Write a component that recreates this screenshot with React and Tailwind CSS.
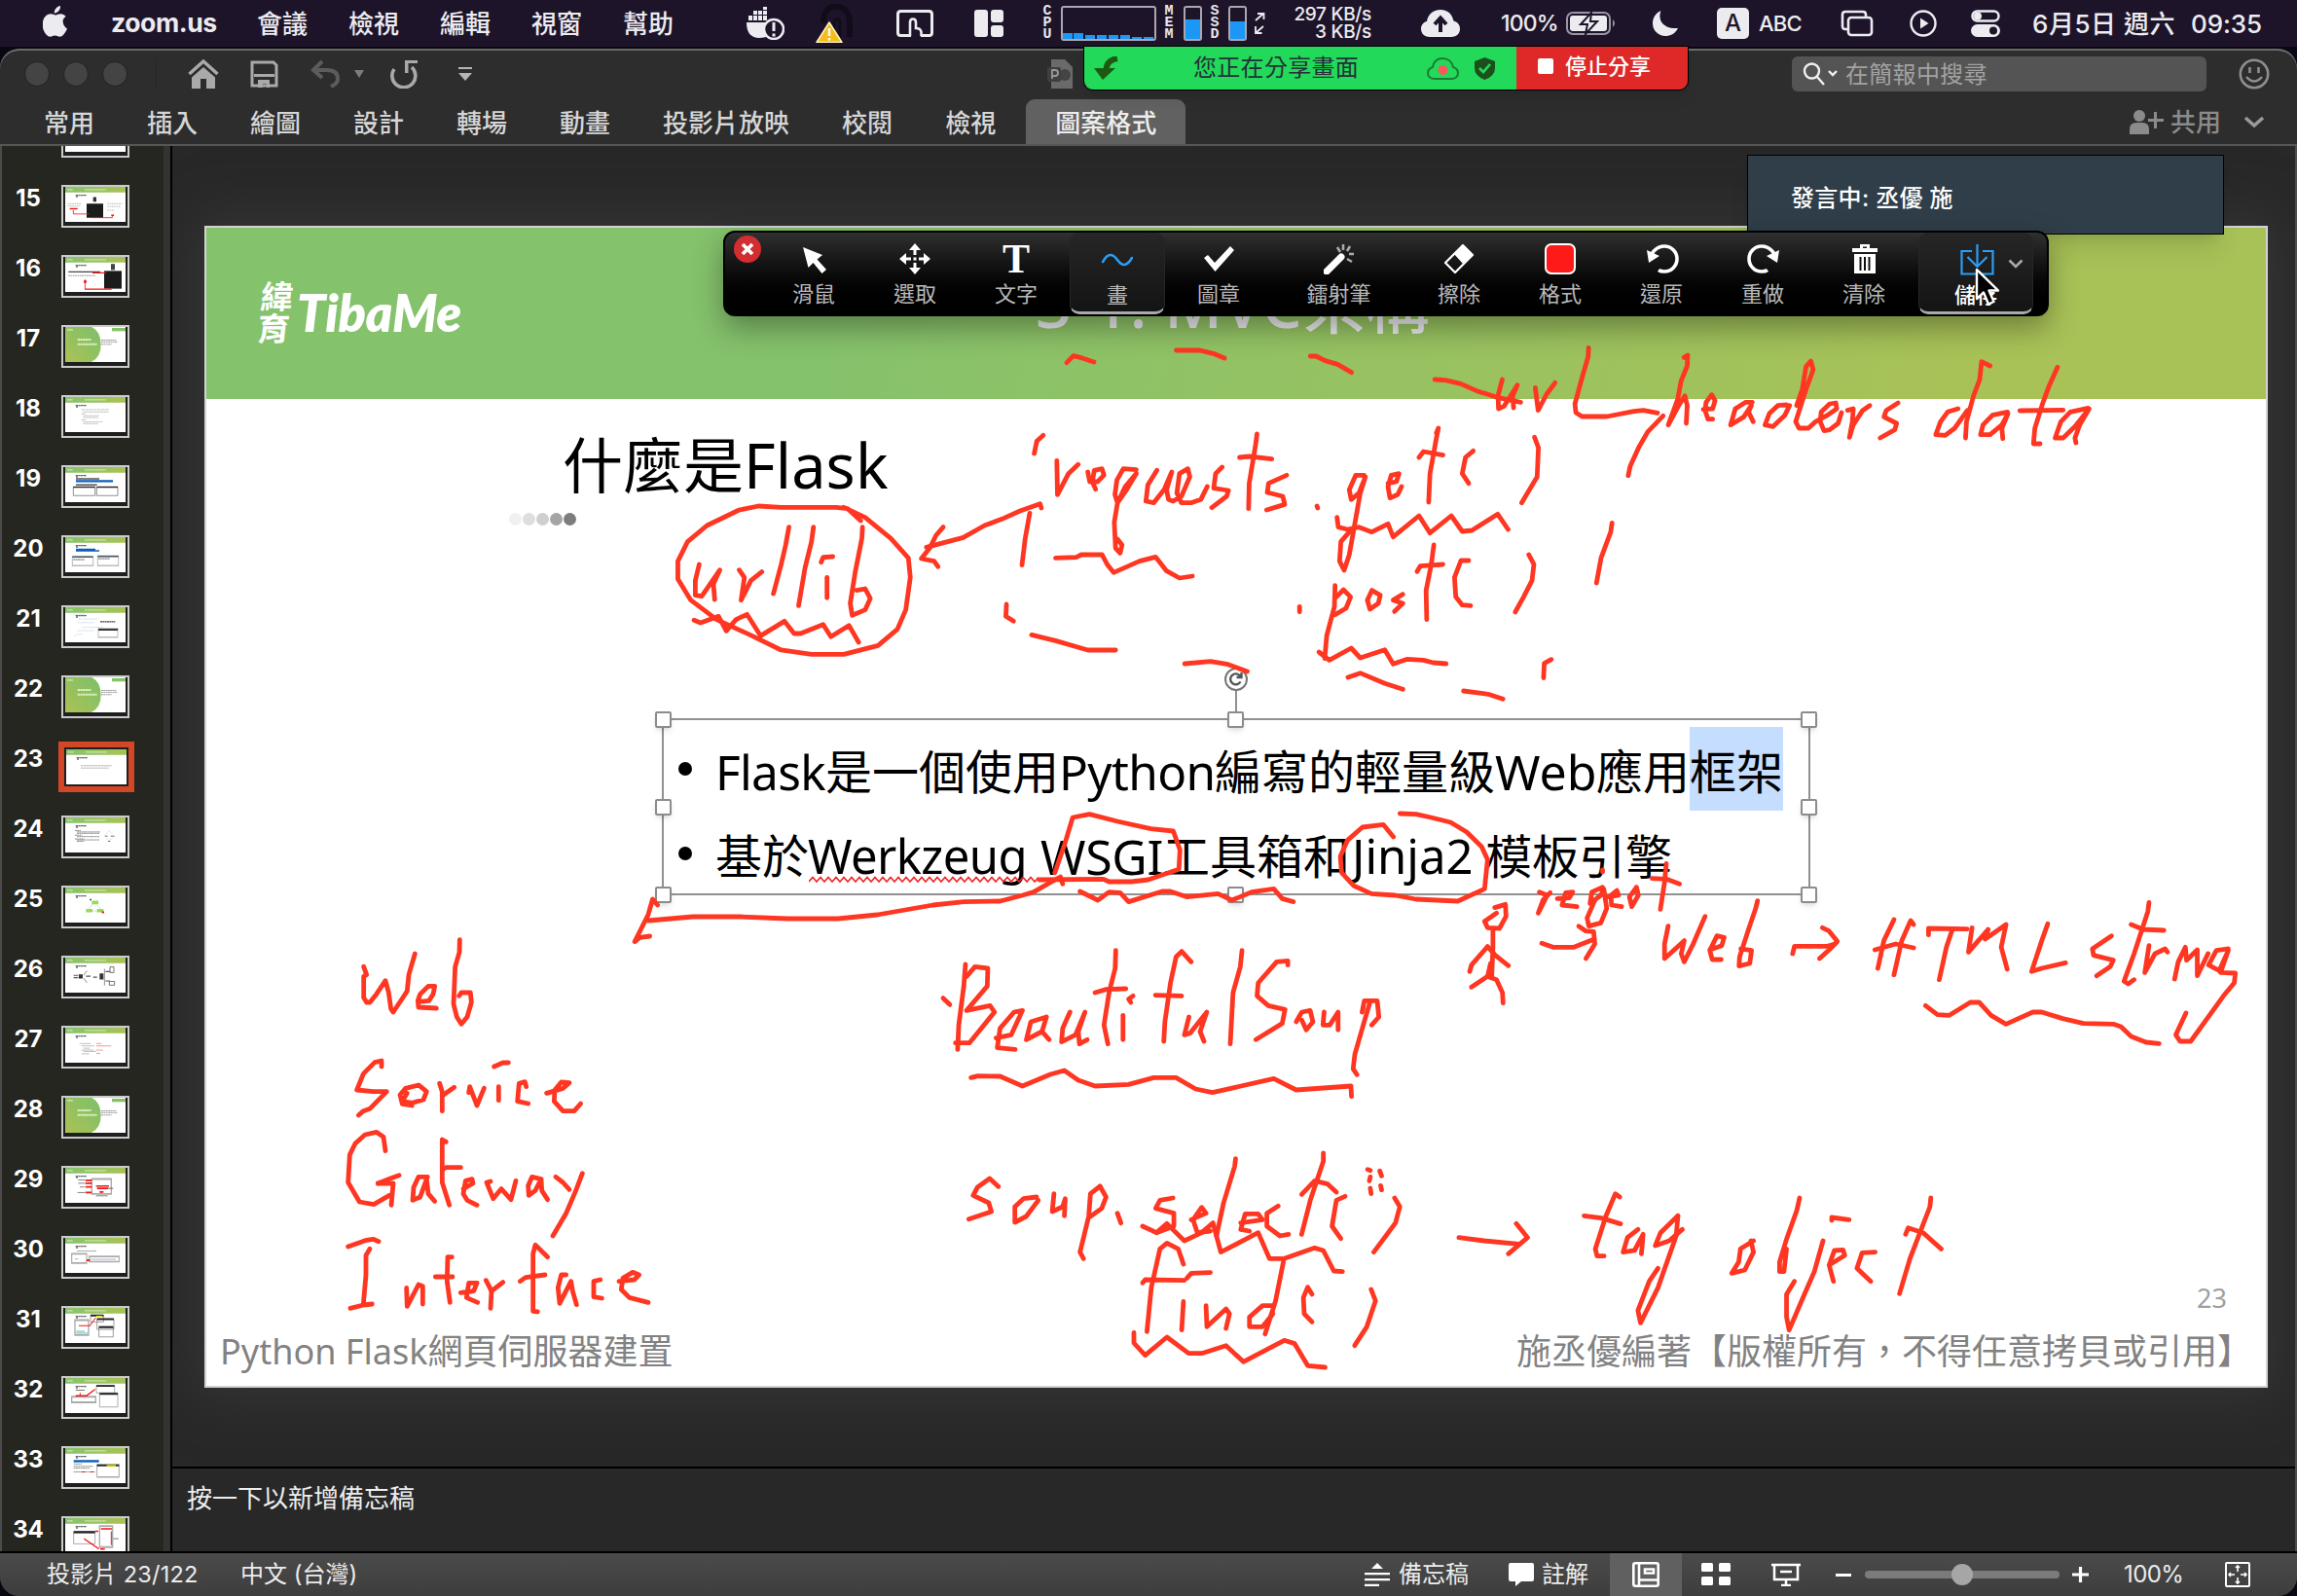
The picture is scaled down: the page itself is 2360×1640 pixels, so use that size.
import React from "react";

/* ---------- freehand ink strokes, grouped by drawing region ---------- */
const INK = [
  {
    t: "translate(730 220) scale(0.4592 0.33333)",
    s: [
      "797,458 812,437 830,443 858,456",
      "1042,420 1095,420 1125,430 1150,444",
      "1342,438 1355,438 1375,452 1403,463 1434,488",
    ],
  },
  {
    t: "translate(1400 220) scale(0.4847 0.33333)",
    s: [
      "153,510 175,512 208,523 242,545 285,565 335,580",
      "296,510 287,560 288,600 300,592 328,527 318,560 320,597",
      "366,535 372,605 390,555 408,520",
      "479,412 478,440 466,500 450,585 452,612 465,624 518,624 575,608 595,605 625,613",
      "637,622 605,670 585,720 567,778 563,806",
      "681,442 689,435 688,468 675,515 668,570 648,650 670,590 683,560 688,590 686,645",
      "722,602 742,600 747,575 740,557 728,580 726,605 732,632 742,632",
      "826,580 812,580 790,600 780,650 808,625 824,590 818,610 828,640",
      "898,588 880,590 862,615 853,650 870,655 895,620 905,590",
      "920,590 932,540 940,470 950,453 955,480 940,540 918,640 925,660 945,660 960,640 985,620 1005,600 1003,582 990,585 972,610 970,640 978,668 990,665 1008,645 1015,612",
      "1028,605 1040,600 1038,640 1032,688 1040,650 1060,605 1075,590",
      "1135,582 1110,605 1105,625 1132,645 1128,665 1097,690",
      "1262,600 1240,610 1225,640 1215,680 1235,682 1255,660 1282,605",
      "1330,468 1312,455 1308,510 1295,560 1280,640 1278,690",
      "1367,610 1335,620 1315,650 1310,680 1330,680 1355,650 1368,615 1355,660 1357,692",
      "1473,472 1455,530 1440,590 1425,660 1422,708 1436,708",
      "1393,606 1485,604",
      "1538,598 1500,610 1480,640 1468,690 1485,690 1510,655 1540,600 1520,650 1510,690 1512,705",
    ],
  },
  {
    t: "translate(660 420) scale(0.66327 0.33333)",
    s: [
      "621,82 611,100 607,138",
      "642,160 643,265 660,200 675,172",
      "690,195 693,225 705,225 715,205 712,185 700,190 697,225 702,248",
      "765,188 745,185 735,220 732,265 736,290 750,250 765,200 748,240 736,290 731,350 733,430 740,445 743,420 736,402",
      "797,190 783,235 780,285 792,290 808,250 820,195 812,250 815,280 822,285 835,270 848,210 845,185 832,200 828,260 835,290 850,290 865,280 875,240",
      "898,180 888,200 885,245 908,252 905,270 882,305",
      "952,78 950,110 940,230 939,308",
      "925,150 940,147 975,155",
      "998,205 970,230 968,258 992,270 995,295 967,312",
      "1045,300 1046,306",
      "1118,205 1105,205 1095,250 1098,280 1110,260 1120,210 1112,260 1104,350 1095,450 1087,498 1080,470 1082,410 1095,380",
      "1155,230 1168,225 1172,200 1160,205 1155,240 1158,275 1170,265 1176,240",
      "1230,75 1233,60 1230,90 1220,200 1218,288",
      "1203,150 1210,132 1240,143",
      "1287,130 1275,150 1270,200 1280,230",
      "1382,88 1388,120 1386,210 1362,290",
      "1076,335 1078,365 1092,372 1110,365 1130,380 1155,355 1163,395 1203,330 1220,383 1253,330 1270,378 1285,375 1325,325 1341,372",
      "600,322 593,400 588,482",
      "618,306 616,293 585,315 557,340 530,360 497,397 440,427",
      "466,365 455,390 445,430 432,462 452,470 458,487",
      "640,460 672,458 680,450 712,450 720,480 730,505 770,470 795,457 812,500 832,522 852,516",
      "564,603 563,640 575,655",
      "603,697 640,715 690,744 733,744",
      "840,786 880,779 905,787 937,810",
      "338,345 318,308 300,304 215,304 180,300 150,312 100,360 70,410 55,470 55,525 75,590 115,650 170,700 215,744 262,757 312,757 365,730 395,680 408,620 415,520 412,460 385,400 345,335 312,304",
      "88,480 82,530 82,575 92,578 120,497 110,540 112,588",
      "150,497 158,520 153,590 168,530 185,503",
      "227,365 222,420 215,480 203,570",
      "265,365 262,410 252,490 242,607",
      "277,473 280,458 295,456",
      "286,520 286,583",
      "341,365 340,400 330,500 322,600 325,637 345,620 353,585 345,555 332,560",
      "80,652 90,660 118,640 130,685 145,650 162,634 183,700 220,655 235,693 245,693 280,665 292,703 320,668 335,720",
      "1018,610 1018,626",
      "1073,545 1072,610 1060,700 1057,770",
      "1075,580 1086,558 1097,580 1090,615 1073,635",
      "1048,750 1064,775 1098,738 1112,768 1150,743 1163,787 1185,772 1210,775 1225,783 1245,786",
      "1130,560 1123,590 1127,618 1140,600 1143,575 1130,560",
      "1178,572 1163,590 1178,600 1165,625",
      "1226,420 1222,480 1214,560 1215,650",
      "1200,502 1205,485 1240,480",
      "1280,468 1268,468 1258,520 1260,580 1270,605 1283,607",
      "1373,450 1381,480 1378,530 1365,580 1352,627",
      "1502,352 1500,380 1485,460 1478,537",
      "1408,773 1397,785 1396,830",
      "1093,828 1112,815 1150,847 1178,865",
      "1272,870 1310,880 1333,895",
    ],
  },
  {
    t: "translate(620 700) scale(0.57398 0.33333)",
    s: [
      "808,590 826,500 840,420 870,410 920,432 980,455 1020,462 1032,520 1030,580 975,612 945,618 905,618 895,610 780,612",
      "822,625 818,603 795,625 770,650 750,660 710,678 645,680 590,690 490,720 420,732 330,732 245,726 160,726 80,738",
      "97,690 88,672 80,720 56,803 65,790 83,786",
      "853,648 885,675 905,650 925,652 940,680 1000,648 1015,648 1045,665 1100,655 1125,675 1160,650 1200,640 1215,670 1235,680",
      "608,977 620,997",
      "648,873 645,940 636,1060 634,1135",
      "650,910 665,880 688,885 687,940 650,1015 692,1000 700,1020 655,1115 630,1115",
      "703,1100 730,1090 750,1015 735,1020 710,1070 705,1130 737,1135",
      "793,1035 765,1050 757,1105 785,1080 793,1035 785,1080 798,1105",
      "835,1020 822,1070 820,1112 845,1090 862,1020 850,1080 852,1118 866,1105",
      "917,830 916,885 905,960 896,1060 903,1118",
      "880,960 900,950 935,948",
      "948,970 940,980 944,990",
      "930,1030 930,1105",
      "1052,865 1035,833 1025,850 1015,930 1005,1050 1003,1110",
      "988,968 1035,970",
      "1048,1035 1040,1090 1050,1085 1080,1020 1068,1080 1075,1110",
      "1143,830 1140,880 1127,960 1122,1118",
      "1225,875 1225,862 1205,865 1172,930 1170,970 1190,1000 1220,1012 1215,1055 1168,1105",
      "1240,1050 1250,1020 1265,1015 1270,1050 1258,1075 1250,1045",
      "1290,1020 1288,1060 1300,1060 1315,1020 1315,1075",
      "1358,1020 1362,985 1385,985 1388,1035 1375,1060",
      "1372,990 1360,1060 1345,1150 1342,1195 1349,1213",
      "658,1222 670,1217 710,1218 750,1248 800,1212 825,1200 850,1230 880,1248 940,1243 985,1222 1025,1222 1060,1257 1090,1268 1200,1225 1240,1260 1338,1248 1339,1280",
    ],
  },
  {
    t: "translate(1360 720) scale(0.61224 0.33333)",
    s: [
      "117,420 100,382 65,390 40,430 28,480 30,530 50,570 80,595 120,600 155,612 225,618 270,580 275,490 265,450 240,405 213,375 180,360 155,350 128,348",
      "362,590 375,600 360,655 368,615 380,592",
      "392,610 412,608 418,590 406,592 400,630 425,635",
      "468,575 450,590 447,625 465,600 470,580 475,640 465,685 445,695 442,670 455,615",
      "468,522 468,528",
      "478,605 495,600 492,585 482,600 483,630 500,635",
      "525,575 513,605 517,635 528,600 525,575",
      "575,502 572,560 565,643",
      "551,548 575,550 597,565",
      "287,638 305,628 306,665 295,702 275,700 270,680 290,655",
      "284,705 284,760 282,850",
      "245,835 248,815 275,758 288,785 310,817",
      "248,883 275,850 280,810",
      "278,852 290,860 300,900 301,932",
      "366,748 385,760 420,760 450,738",
      "428,695 440,710 453,712 455,750 440,795",
      "578,695 572,750 572,795 605,740 600,780 605,805 620,750 640,665",
      "648,768 668,755 672,730 660,725 648,770 652,798 667,798",
      "728,617 725,640 712,710 698,790 697,818 715,810 718,770 700,765",
      "787,780 790,757 845,757 858,750",
      "837,700 848,710 862,742 850,765 832,795",
      "957,675 940,740 930,825",
      "990,690 985,678 970,740 957,845",
      "925,768 960,750 990,762",
      "1015,722 1015,702 1080,704",
      "1055,705 1045,760 1033,860",
      "1088,700 1082,775 1115,705 1110,735 1145,690 1137,760 1147,828",
      "1215,688 1205,740 1188,835 1205,825 1245,808",
      "1322,725 1290,765 1292,785 1325,800 1320,820 1297,848",
      "1385,622 1383,650 1360,780 1343,865 1350,873 1360,860",
      "1355,690 1375,705 1410,708",
      "1385,755 1378,838 1395,780 1412,765 1416,775",
      "1428,858 1434,805 1446,760 1448,800 1466,768 1466,848 1484,780",
      "1518,765 1498,770 1485,815 1503,832 1518,770 1505,838 1530,840 1528,870 1510,910 1455,1050 1437,1050 1430,1030 1447,963",
      "1010,940 1030,968 1050,970 1085,930 1100,930 1120,970 1145,997 1190,960 1205,960 1240,980 1275,995 1325,997 1338,1005 1355,1035 1380,1053 1402,1057",
    ],
  },
  {
    t: "translate(200 940) scale(0.33333)",
    s: [
      "521,160 530,185 521,190 521,255 530,270 540,270 560,245 588,203 598,240 605,290 612,300 642,255 655,235 660,185 679,120",
      "690,268 722,265 735,245 740,220 720,220 695,245 688,265 690,285 745,288",
      "817,77 816,115 803,160 798,275 808,315 822,337 840,315 853,270 850,240 822,240 815,250",
      "576,468 576,450 555,455 520,490 500,540 550,545 592,545 540,598 520,605 505,618",
      "670,588 640,583 633,555 650,535 690,525 715,545 705,570 670,580 640,575 655,550",
      "755,520 763,545 763,605",
      "763,558 800,532",
      "845,548 848,530 870,588 892,535",
      "937,530 937,572",
      "923,468 950,456 967,456",
      "1022,530 1018,515 1000,520 995,575 1028,582",
      "1085,550 1135,535 1155,518 1130,516 1110,540 1108,575 1135,605 1170,605 1190,582",
      "588,728 582,685 560,670 525,678 495,705 478,740 473,825 508,885 552,893 600,865",
      "565,828 605,812 630,803",
      "565,828 612,828 606,895",
      "718,808 690,808 675,840 672,880 695,870 715,815 720,860 740,883",
      "775,700 763,693 763,825 785,895",
      "765,784 775,779 820,779",
      "828,845 858,828 855,815 835,820 828,860 840,880 870,895",
      "912,822 900,825 920,875 945,845 975,878 990,820",
      "1068,815 1040,808 1028,835 1030,865 1050,850 1068,815 1070,850 1088,878",
      "1113,808 1135,825 1155,847",
      "1195,797 1175,850 1145,920 1104,990",
      "473,1023 530,1003 550,1000 567,1007",
      "540,1030 528,1050 528,1110 520,1200",
      "480,1213 520,1203 547,1200",
      "653,1150 655,1207 690,1140 703,1145 703,1200",
      "793,1055 780,1055 778,1130 787,1195",
      "742,1116 795,1116",
      "820,1165 860,1160 870,1135 845,1135 838,1180 872,1195",
      "898,1127 915,1160 912,1213",
      "915,1160 950,1133",
      "1088,1055 1050,1018 1043,1045 1043,1222 1057,1224",
      "1003,1130 1020,1118 1080,1110",
      "1145,1110 1130,1110 1120,1150 1125,1198 1160,1130 1165,1160 1177,1202",
      "1250,1125 1230,1130 1230,1178 1255,1182",
      "1308,1130 1355,1125 1370,1110 1350,1102 1320,1120 1315,1155 1340,1180 1398,1195",
    ],
  },
  {
    t: "translate(940 1150) scale(0.89286 0.33333)",
    s: [
      "96,208 86,183 72,210 67,235 85,258 88,285 62,308",
      "140,240 125,245 115,270 115,318 128,300 142,250",
      "160,230 158,285 170,270 173,245 172,298",
      "213,207 202,230 200,300 190,410 194,430",
      "213,207 220,240 215,275 202,300",
      "233,290 237,320",
      "297,243 282,250 277,275 298,290 298,330 278,350 262,330",
      "278,350 290,322 310,375 330,350 343,320 352,410 395,350 408,430 425,430 460,397 470,405 482,468 492,470",
      "318,310 335,290 330,272 320,310 325,350 340,345",
      "369,122 368,145 355,260 347,360",
      "375,320 400,310 395,292 380,292 375,340 385,345",
      "418,268 405,290 405,330 420,360 430,355",
      "470,105 470,130 455,250 445,355",
      "445,232 460,190 475,200 485,225",
      "495,238 485,250 480,330 490,368",
      "521,155 524,158",
      "524,178 523,190",
      "535,160 537,175",
      "524,213 525,230",
      "536,205 537,218",
      "552,243 558,270 553,320 528,410",
      "626,365 655,375 695,385",
      "692,322 705,365 683,415",
      "309,447 303,400 290,382 282,400 272,520 267,655",
      "262,505 265,495 310,497",
      "313,490 318,475 340,473",
      "309,562 307,650",
      "335,575 336,640 358,585 362,600 358,645",
      "413,575 400,575 385,610 385,640 400,640 412,600",
      "424,440 415,560 403,662",
      "457,540 452,518 447,550 448,600 457,625",
      "525,525 530,560 520,640 506,698",
      "252,658 252,690 265,728 290,672 315,722 330,722 358,698 378,748 425,682 437,692 452,760 472,765",
      "811,240 806,230 795,300 783,400 785,422 793,422",
      "770,298 790,305 812,323",
      "832,340 820,365 815,410 828,405 838,355 836,415",
      "878,298 858,350 852,390 868,375 883,340",
      "878,298 876,360 855,520 835,628 832,590 845,500 855,460",
      "965,375 950,400 948,440 940,475 955,465 965,410 962,375",
      "1018,243 1015,280 1003,370 995,440 995,470 1000,470 1003,400",
      "1045,375 1035,470 1022,550 1006,650 1003,610 1003,540 1012,500",
      "1055,312 1055,303 1075,310",
      "1052,450 1070,420 1068,403 1058,405 1052,450 1057,500",
      "1105,410 1090,412 1084,460 1100,500",
      "1169,243 1168,270 1145,430 1133,538",
      "1140,355 1143,335 1160,350 1181,400",
    ],
  },
];

function Ink() {
  return (
    <svg className="pointer-events-none absolute left-0 top-0 h-[1640px] w-[2360px]" viewBox="0 0 2360 1640" fill="none" stroke="#ff3621" strokeWidth="4.8" strokeLinecap="round" strokeLinejoin="round">
      {INK.map((g, i) => (
        <g key={i} transform={g.t}>
          {g.s.map((p, j) => (
            <polyline key={j} points={p} vectorEffect="non-scaling-stroke" />
          ))}
        </g>
      ))}
    </svg>
  );
}

/* ---------- macOS menu bar ---------- */
function VLabel({ text }) {
  return (
    <span className="flex w-3 flex-col items-center font-['Liberation_Mono',monospace] text-[15px] font-bold leading-[12px] text-gray-200">
      {text.split("").map((c, i) => (
        <span key={i}>{c}</span>
      ))}
    </span>
  );
}

function MenuBar() {
  return (
    <div className="flex h-12 items-center whitespace-nowrap bg-[#1e142a] pb-[15px] pt-[15px] text-[26px] font-medium text-[#ececf0]">
      <svg className="ml-11 h-8 w-[26px] shrink-0 -translate-y-0.5" viewBox="0 0 26 32" fill="#ececf0">
        <path d="M18 0c.2 2-.5 3.900-1.700 5.300C15.100 6.700 13.400 7.600 11.800 7.400 11.600 5.600 12.500 3.700 13.600 2.500 14.800 1.100 16.600.2 18 0zM25 23.600c-.7 1.600-1.100 2.300-2 3.700-1.300 2-3.100 4.400-5.300 4.400-2 0-2.500-1.300-5.200-1.300s-3.300 1.300-5.300 1.300c-2.200 0-3.900-2.200-5.200-4.200C-1.500 22-.8 14.600 2.500 11 4 9.200 6 8.200 8 8.200c2.200 0 3.500 1.200 5.200 1.200 1.700 0 2.700-1.200 5.200-1.200 1.800 0 3.800 1 5.200 2.700-4.500 2.500-3.800 9 1.400 12.700z" />
      </svg>
      <b className="ml-11 w-[110px] text-[26.5px] font-bold tracking-[-0.4px]">zoom.us</b>
      <span className="ml-10 w-[54px]">會議</span>
      <span className="ml-10 w-[54px]">檢視</span>
      <span className="ml-10 w-[54px]">編輯</span>
      <span className="ml-10 w-[54px]">視窗</span>
      <span className="ml-10 w-[54px]">幫助</span>
      <svg className="ml-[72px] h-[34px] w-10 shrink-0" viewBox="0 0 40 34">
        <path d="M1 16h22v4c3-2 6-1 8 0 -2 8-8 12-17 12C6 32 1 27 1 16z" fill="#ececf0" />
        <path d="M3 9h4v5H3zM8 9h4v5H8zM13 9h4v5h-4zM18 9h4v5h-4zM8 4h4v4H8zM13 4h4v4h-4zM18 4h4v4h-4zM18 0h4v3h-4z" fill="#ececf0" />
        <circle cx="29" cy="23" r="10" fill="#1e142a" stroke="#ececf0" strokeWidth="2.500" />
        <path d="M29 16v9M29 27.500v3" stroke="#ececf0" strokeWidth="3" />
      </svg>
      <svg className="ml-8 h-10 w-10 shrink-0" viewBox="0 0 40 40">
        <path d="M8 20C8 6 14 3 21 3s14 4 14 17v14" fill="none" stroke="#120c1a" strokeWidth="6" />
        <path d="M19 34V18q3-5 6 0v16" fill="none" stroke="#120c1a" strokeWidth="3" />
        <path d="M14 19 27 39.500H1z" fill="#f5bd1c" stroke="#fff4c0" strokeWidth="1.500" strokeLinejoin="round" />
        <path d="M14 25v8M14 35v2.500" stroke="#fff" strokeWidth="2.500" />
      </svg>
      <svg className="ml-[43px] h-7 w-[38px] shrink-0" viewBox="0 0 38 28" fill="none" stroke="#ececf0" strokeWidth="3">
        <path d="M15 26.500H4.500Q1.500 26.500 1.500 23.500V4.500Q1.500 1.500 4.500 1.500h29q3 0 3 3v19q0 3-3 3H25" />
        <path d="M14 27V13q0-3.500 3-3.500t3 3.500v6q5 0 5.500 4v4" strokeWidth="2.600" />
      </svg>
      <svg className="ml-[42px] h-7 w-[30px] shrink-0" viewBox="0 0 30 28" fill="#ececf0">
        <rect width="14" height="28" rx="3" />
        <rect x="17" width="13" height="13" rx="3" />
        <rect x="17" y="16" width="13" height="12" rx="3" />
      </svg>
      <span className="ml-[39px]"><VLabel text="CPU" /></span>
      <svg className="ml-2 h-9 w-[98px] shrink-0" viewBox="0 0 98 36">
        <rect x="1" y="1" width="96" height="34" rx="2" fill="#1e142a" stroke="#aaa6b2" strokeWidth="2" />
        <g fill="#1b98f5">
          <path d="M2 28h10v6H2zM13 28h10v6H13zM25 30h10v4H25zM37 30h10v4H37zM49 30h10v4H49zM61 30h10v4H61zM73 32h10v2H73zM85 32h10v2H85z" />
        </g>
      </svg>
      <span className="ml-[7px]"><VLabel text="MEM" /></span>
      <svg className="ml-[9px] h-9 w-[19px] shrink-0" viewBox="0 0 19 36">
        <rect x="1" y="1" width="17" height="34" rx="2" fill="none" stroke="#aaa6b2" strokeWidth="2" />
        <path d="M2 14h15v20H2z" fill="#1b98f5" />
      </svg>
      <span className="ml-[7px]"><VLabel text="SSD" /></span>
      <svg className="ml-2 h-9 w-[19px] shrink-0" viewBox="0 0 19 36">
        <rect x="1" y="1" width="17" height="34" rx="2" fill="none" stroke="#aaa6b2" strokeWidth="2" />
        <path d="M2 16h15v18H2z" fill="#1b98f5" />
      </svg>
      <svg className="ml-[7px] h-6 w-3 shrink-0" viewBox="0 0 12 24" fill="none" stroke="#ececf0" strokeWidth="1.800">
        <path d="M2 9 10 2M4 2h6.500v6M10 15 2 22M8.500 22H2v-7" />
      </svg>
      <span className="w-[109px] text-right text-[19px] leading-[18px] tracking-[-0.3px]">297 KB/s<br />3 KB/s</span>
      <svg className="ml-[51px] h-7 w-10 shrink-0" viewBox="0 0 40 28">
        <path d="M9 28C3 28 0 24 0 19.500c0-4 3-7 6-7.500C7 5 12 0 20 0s12 5 13.500 11.500C37 12.500 40 15 40 19.500 40 24 37 28 31 28z" fill="#ececf0" />
        <path d="M20 23V10M14 15l6-6.500 6 6.500" fill="none" stroke="#1e142a" strokeWidth="4" />
      </svg>
      <span className="ml-[42px] w-[60px] text-[23px] tracking-[-0.8px]">100%</span>
      <svg className="ml-[7px] h-6 w-[52px] shrink-0" viewBox="0 0 52 24">
        <rect x="1" y="1" width="44" height="22" rx="6" fill="none" stroke="#9b96a4" strokeWidth="2" />
        <rect x="4" y="4" width="38" height="16" rx="3" fill="#ececf0" />
        <path d="M48 8q4 4 0 8z" fill="#9b96a4" />
        <path d="M26 1 15 13h7l-2 10 12-13h-7z" fill="#ececf0" stroke="#1e142a" strokeWidth="2" />
      </svg>
      <svg className="ml-[37px] h-[26px] w-[26px] shrink-0" viewBox="0 0 26 26" fill="#ececf0">
        <path d="M8.500 0C5 9 10 19 26 18c-3 6-8 8-13 8C6 26 0 20.500 0 13 0 7 3.500 2 8.500 0z" />
      </svg>
      <span className="ml-10 flex h-8 w-[33px] items-center justify-center rounded-[5px] bg-[#ececf0] text-2xl text-[#1e142a]">A</span>
      <span className="ml-2.5 w-[45px] text-[22px] tracking-[-0.8px]">ABC</span>
      <svg className="ml-[39px] h-7 w-[34px] shrink-0" viewBox="0 0 34 28" fill="none" stroke="#ececf0" strokeWidth="2.600">
        <path d="M8 20H5q-3 0-3-3V5q0-3 3-3h18q3 0 3 3v2" />
        <rect x="8" y="8" width="24" height="18" rx="3" />
      </svg>
      <svg className="ml-[37px] h-7 w-7 shrink-0" viewBox="0 0 28 28">
        <circle cx="14" cy="14" r="12.500" fill="none" stroke="#ececf0" strokeWidth="2.400" />
        <path d="M11 8.500v11l8.500-5.500z" fill="#ececf0" />
      </svg>
      <svg className="ml-[35px] h-7 w-[30px] shrink-0" viewBox="0 0 30 28">
        <rect x="1.500" y="1.500" width="27" height="10" rx="5" fill="none" stroke="#ececf0" strokeWidth="2.500" />
        <circle cx="7" cy="6.500" r="4" fill="#ececf0" />
        <rect y="15" width="30" height="13" rx="6.500" fill="#ececf0" />
        <circle cx="23" cy="21.500" r="4" fill="#1e142a" />
      </svg>
      <span className="ml-[33px] w-[150px] tracking-[0.5px]">6月5日 週六</span>
      <span className="ml-[13px] text-[26px] tracking-[-0.1px]">09:35</span>
    </div>
  );
}

/* ---------- window title bar and ribbon ---------- */
function TitleBar() {
  return (
    <div className="flex h-[52px] items-center pl-[25px] pr-[28px]">
      <i className="h-[26px] w-[26px] rounded-full border border-[#232323] bg-[#444]" />
      <i className="ml-3.5 h-[26px] w-[26px] rounded-full border border-[#232323] bg-[#444]" />
      <i className="ml-3.5 h-[26px] w-[26px] rounded-full border border-[#232323] bg-[#444]" />
      <i className="ml-[29px] h-8 w-px bg-[#262626]" />
      <svg className="ml-8 h-[30px] w-8" viewBox="0 0 32 30">
        <path d="M1.500 15 16 2l14.500 13" fill="none" stroke="#a9a9a9" strokeWidth="3.500" />
        <path d="M16 8 28 18.500V30h-9V20h-6v10H4V18.500z" fill="#a9a9a9" />
      </svg>
      <svg className="ml-8 h-7 w-[29px]" viewBox="0 0 29 28">
        <path d="M2 2h22l3 3v21H2z" fill="none" stroke="#a9a9a9" strokeWidth="3" />
        <path d="M4 14h21v3H4zM8 20h12v8h-3v-4h-4v4H8z" fill="#a9a9a9" />
      </svg>
      <svg className="ml-[33px] h-7 w-[31px]" viewBox="0 0 31 28" fill="none" stroke="#5c5c5c" strokeWidth="4">
        <path d="M12 1 3 10l9 8M3 10h14q11 0 11 9 0 5-7 8" />
      </svg>
      <svg className="ml-3.5 h-2 w-2.5" viewBox="0 0 10 8"><path d="M0 0h10L5 8z" fill="#7d7d7d" /></svg>
      <svg className="ml-[26px] h-[30px] w-[30px]" viewBox="0 0 30 30">
        <path d="M5 10a12 12 0 1 0 18-2" fill="none" stroke="#a9a9a9" strokeWidth="3.600" />
        <path d="M16 1h13v3H19.500v10H16z" fill="#a9a9a9" />
      </svg>
      <svg className="ml-10 h-3.5 w-4" viewBox="0 0 16 14"><path d="M1 0h14v2H1zM1 6h14l-7 8z" fill="#b5b5b5" /></svg>
      <svg className="ml-[590px] h-[30px] w-[26px]" viewBox="0 0 26 30">
        <path d="M4 0h14l8 8v22H4z" fill="#6a6a6a" />
        <circle cx="18" cy="16" r="6" fill="#444" />
        <rect y="8" width="14" height="15" rx="2" fill="#3f3f3f" />
        <path d="M5 20v-9h3q3 0 3 3t-3 3H5" fill="none" stroke="#999" strokeWidth="1.800" />
      </svg>
      <span className="ml-auto flex h-9 w-[426px] items-center rounded-[6px] bg-[#545454] pl-[11px] text-[24px] text-[#a2a2a2]">
        <svg className="h-6 w-[38px]" viewBox="0 0 38 24" fill="none" stroke="#f0f0f0" strokeWidth="2.400">
          <circle cx="9.500" cy="9" r="7.500" />
          <path d="m15 15 7 8M27 9l4 4 4-4" />
        </svg>
        <span className="pl-1.5 pt-0.5 tracking-[0.3px]">在簡報中搜尋</span>
      </span>
      <svg className="ml-[33px] h-8 w-8" viewBox="0 0 32 32" fill="none" stroke="#8e8e8e" strokeWidth="2.600">
        <circle cx="16" cy="16" r="14.200" />
        <path d="M11.500 9v6M20.500 9v6M8 19q8 9 16 0" />
      </svg>
    </div>
  );
}

const TABS = ["常用", "插入", "繪圖", "設計", "轉場", "動畫", "投影片放映", "校閱", "檢視"];

function Ribbon() {
  return (
    <div className="flex h-[46px] items-center text-[26px] font-medium text-[#d6d6d6]">
      <div className="flex gap-[54px] pl-[45px] pt-[2px]">
        {TABS.map((t) => (
          <span key={t}>{t}</span>
        ))}
      </div>
      <span className="ml-[31px] flex h-[46px] w-[164px] items-center justify-center rounded-t-[9px] bg-[#616161] pt-[2px] text-[#ededed]">圖案格式</span>
      <span className="ml-auto flex items-center pr-[33px] text-[#8b8b8b]">
        <svg className="h-[25px] w-9" viewBox="0 0 36 25" fill="#8b8b8b">
          <circle cx="11" cy="6" r="6" />
          <path d="M1 25v-5q0-7 7-7h6q7 0 7 7v5zM26 2h3v7h7v3h-7v7h-3v-7h-6V9h6z" />
        </svg>
        <span className="ml-[7px] text-[26px]">共用</span>
        <svg className="ml-[23px] h-3 w-[22px]" viewBox="0 0 22 12"><path d="m2 2 9 8 9-8" fill="none" stroke="#9a9a9a" strokeWidth="3.500" /></svg>
      </span>
    </div>
  );
}

/* ---------- slide thumbnails: viewBox is 186 x 75 ---------- */
const red = "#f01616";
const THUMBS = {
  14: null,
  15: (
    <g>
      <path d="M86 22h10v10H86z" fill="#333" />
      <path d="M66 36h51v30H66z" fill="#1b1b1b" />
      <path d="M8 36h42M8 41h38M130 36h45M130 42h40M130 50h22" stroke="#aaa" strokeWidth="2" strokeDasharray="5 2" />
      <path d="M25 50v8h48M145 60v6H82" stroke={red} strokeWidth="2" fill="none" />
      <path d="M14 47h24M142 61h8" stroke={red} strokeWidth="3" />
    </g>
  ),
  16: (
    <g>
      <path d="M141 15h12v13h-12z" fill="#444" />
      <path d="M120 30h54v38h-54z" fill="#1b1b1b" />
      <path d="M10 32h98" stroke="#445" strokeWidth="3" />
      <path d="M10 40h82" stroke="#777" strokeWidth="2" strokeDasharray="5 2" />
      <path d="M84 34h42M61 48v21h82" stroke={red} strokeWidth="2.500" fill="none" />
      <path d="M57 53h9" stroke={red} strokeWidth="5" />
    </g>
  ),
  18: <path d="M50 27h85M55 32h80M50 36h12M55 40h50M55 44h46M50 49h14M55 53h60M55 57h46" stroke="#aaa" strokeWidth="1.800" strokeDasharray="7 1" />,
  19: (
    <g>
      <path d="M33 25h72M33 38h65" stroke="#555" strokeWidth="3" />
      <path d="M33 30h114" stroke="#0a5fb8" strokeWidth="5" />
      <path d="M25 42h67v19H25zM97 42h65v19H97z" fill="#fff" stroke="#777" strokeWidth="2" />
      <path d="M25 43h67M97 43h65" stroke="#222" strokeWidth="3" />
    </g>
  ),
  20: (
    <g>
      <path d="M33 26h60M33 29h72" stroke="#0a5fb8" strokeWidth="3" />
      <path d="M22 42h64v19H22zM100 40h64v21h-64z" fill="#fff" stroke="#bbb" strokeWidth="3" />
      <path d="M22 42h64M100 41h64" stroke="#456" strokeWidth="3" />
      <path d="M25 48h34M102 46h36" stroke="#444" strokeWidth="2" strokeDasharray="6 1" />
    </g>
  ),
  21: (
    <g>
      <path d="M26 16h6M34 15h26M40 25h60M40 33h50M50 43h68M38 50h52M34 58h18M26 62h6" stroke="#d3dcef" strokeWidth="2" />
      <path d="M108 31h46" stroke="#444" strokeWidth="2.500" strokeDasharray="6 1" />
      <path d="M102 46h60v18h-60z" fill="#fff" stroke="#bbb" strokeWidth="3" />
      <path d="M102 48h60" stroke="#333" strokeWidth="4" />
    </g>
  ),
  23: <path d="M45 35h95M45 40h86" stroke="#999" strokeWidth="1.800" strokeDasharray="8 1" />,
  24: (
    <g>
      <path d="M30 28h18M36 31h72M36 34h70M30 38h22M36 41h70M30 46h28M36 48h70M36 51h22" stroke="#666" strokeWidth="1.800" strokeDasharray="6 1" />
      <path d="M122 40h9M140 40h12M132 51h7" stroke="#555" strokeWidth="2" />
      <path d="m125 36 10-8 12 8M126 44l8 6 12-6" stroke="#bbb" fill="none" />
    </g>
  ),
  25: (
    <g>
      <path d="M82 28h20v8H82zM64 46h20v7H64zM98 46h20v7H98z" fill="#93dc5c" />
      <path d="m74 45 10-9M108 45 98 37M84 50h14" stroke="#999" />
      <path d="M113 53h7" stroke={red} strokeWidth="4" />
      <path d="M76 26h5" stroke="#333" strokeWidth="3" />
    </g>
  ),
  26: (
    <g>
      <path d="M42 36h12v9H42zM106 34h12v13h-12z" fill="#333" />
      <path d="M26 38h14M26 43h14M64 40h14M86 42h12M124 30h14M124 50h14" stroke="#555" strokeWidth="2.500" />
      <path d="M57 38 67 28M57 44l10 10M121 24v36" stroke="#777" strokeWidth="2" fill="none" />
      <path d="M138 20h12v12h-12zM136 51h16v8h-16z" fill="#fff" stroke="#555" strokeWidth="2" />
    </g>
  ),
  27: (
    <g>
      <path d="M44 34h35M50 39h40M56 44h20M50 48h38M56 51h40M50 56h24" stroke="#aaa" strokeWidth="1.800" />
      <path d="M96 34h16M96 39h46M96 48h20M96 55h12" stroke="#f58080" strokeWidth="2" />
    </g>
  ),
  29: (
    <g>
      <path d="M82 24h60v32H82z" fill="#fff" stroke="#aaa" strokeWidth="4" />
      <path d="M40 26h20M40 33h20M45 41h14M38 53h22M95 60h36" stroke="#666" strokeWidth="2" />
      <path d="M62 27h20M62 33h20M62 41h20M62 53h20M95 39h40M98 44h34M106 52h12" stroke={red} strokeWidth="3.500" />
      <path d="M132 44h16" stroke="#444" strokeWidth="2" />
    </g>
  ),
  30: (
    <g>
      <path d="M36 28h60" stroke="#999" strokeWidth="2" />
      <path d="M20 34h46v20H20zM74 40h92v11H74z" fill="#fff" stroke="#aaa" strokeWidth="3.500" />
      <path d="M30 45h10M76 46h80" stroke="#99b" strokeWidth="2" />
      <path d="M66 48h10" stroke={red} strokeWidth="4" />
    </g>
  ),
  31: (
    <g>
      <path d="M30 26h42v32H30z" fill="#fff" stroke="#aaa" strokeWidth="4" />
      <path d="M34 50h26M34 54h36" stroke="#4aa" strokeWidth="2" />
      <path d="M78 16h40v14H78zM98 24h52v22H98zM104 40h44v22h-44z" fill="#fff" stroke="#888" strokeWidth="2" />
      <path d="M78 16h40M98 24h52M104 41h44" stroke="#222" strokeWidth="4" />
      <path d="M96 18h18" stroke="#e8e800" strokeWidth="3" />
      <path d="m42 38h34l18-17" stroke={red} strokeWidth="2.500" fill="none" />
    </g>
  ),
  32: (
    <g>
      <path d="M20 40h74v12H20z" fill="#fff" stroke="#aaa" strokeWidth="4" />
      <path d="M96 16h56v16H96zM106 32h56v30h-56z" fill="#fff" stroke="#999" strokeWidth="2" />
      <path d="M96 17h56M106 34h56" stroke="#222" strokeWidth="4" />
      <path d="M32 38h34l26-14M46 32v6" stroke={red} strokeWidth="3" fill="none" />
      <path d="M32 26h28" stroke="#555" strokeWidth="2" />
    </g>
  ),
  33: (
    <g>
      <path d="M26 28h78" stroke="#0a5fb8" strokeWidth="5" />
      <path d="M26 34h26M26 39h60M26 43h50M26 51h66" stroke="#777" strokeWidth="2" strokeDasharray="6 1" />
      <path d="M50 51h12M78 51h10" stroke={red} strokeWidth="2.500" />
      <path d="M98 36h68v26H98z" fill="#fff" stroke="#aaa" strokeWidth="3" />
      <path d="M98 37h68" stroke="#222" strokeWidth="4" />
      <path d="M128 38h28" stroke="#d8d800" strokeWidth="4" />
    </g>
  ),
  34: (
    <g>
      <path d="M26 30h66v25H26z" fill="#fff" stroke="#999" strokeWidth="2" />
      <path d="M26 30h66" stroke="#222" strokeWidth="5" />
      <path d="M106 17h40v45h-40z" fill="#fff" stroke="#aaa" strokeWidth="4" />
      <path d="M110 23h34M142 28v30M104 66 58 44M92 28h10M108 66h14" stroke={red} strokeWidth="3" fill="none" />
      <path d="M148 44h16" stroke="#555" strokeWidth="2" />
    </g>
  ),
};
const COVERS = [17, 22, 28];
const NUMBERS = Array.from({ length: 21 }, (_, i) => i + 14);

function MiniSlide({ n }) {
  if (COVERS.includes(n)) {
    return (
      <svg className="h-9 w-[62px]" viewBox="0 0 186 75" preserveAspectRatio="none">
        <rect width="186" height="75" fill="#fff" />
        <path d="M0 0h82q28 10 28 38T80 75H0z" fill="url(#coverGrad)" />
        <path d="M144 2h42v7h-42z" fill="#86c267" />
        <path d="M38 27h42M38 37h60" stroke="#d9eebf" strokeWidth="4" strokeDasharray="7 1" />
        <path d="M111 28h46M111 32h50M111 37h32" stroke="#888" strokeWidth="2" strokeDasharray="6 1" />
        <path d="M6 6h18" stroke="#c8e6b4" strokeWidth="3" />
      </svg>
    );
  }
  return (
    <svg className="h-9 w-[62px]" viewBox="0 0 186 75" preserveAspectRatio="none">
      <rect width="186" height="75" fill="#fff" />
      <rect width="186" height="12" fill="url(#headGrad)" />
      <path d="M6 6h18M60 6h66" stroke="#cfe6b4" strokeWidth="2.500" strokeDasharray="8 1" />
      <path d="M32 18h34M33 21h6" stroke="#666" strokeWidth="2.500" strokeDasharray="7 1" />
      {THUMBS[n]}
    </svg>
  );
}

function Sidebar() {
  return (
    <div className="flex w-[177px] shrink-0 overflow-hidden border-r-2 border-black bg-[#333]">
      <svg className="absolute h-0 w-0">
        <defs>
          <linearGradient id="headGrad"><stop offset="0" stopColor="#86c36c" /><stop offset="1" stopColor="#a9c255" /></linearGradient>
          <linearGradient id="coverGrad" x1="1" y1="0" x2="0" y2="1"><stop offset="0" stopColor="#7cc06b" /><stop offset="1" stopColor="#abc254" /></linearGradient>
        </defs>
      </svg>
      <div className="w-[168px] border-l-2 border-[#4c4c4c] bg-[#252620]">
        <div className="-mt-8 flex flex-col">
          {NUMBERS.map((n) => (
            <div key={n} className="flex h-[72px] items-start">
              <span className="flex w-[57px] justify-center pr-[3px] pt-px text-[24px] font-bold leading-[25px] text-white">{n > 14 ? n : null}</span>
              {n === 23 ? (
                <span className="-mt-1 ml-px flex h-[52px] w-[78px] items-center justify-center border-[6px] border-[#d24726] bg-[#1f1f1f]">
                  <MiniSlide n={n} />
                </span>
              ) : (
                <span className="ml-1 flex h-11 w-[70px] items-start justify-center border-2 border-[#cbcbcb] bg-[#1f1f1f]">
                  <MiniSlide n={n} />
                </span>
              )}
            </div>
          ))}
        </div>
      </div>
    </div>
  );
}

/* ---------- the slide ---------- */
function Handle({ className }) {
  return <i className={"absolute h-[17px] w-[17px] rounded-[2px] border-2 border-[#8c8c8c] bg-white shadow-md " + className} />;
}

function Slide() {
  return (
    <div className="flex h-[1194px] w-[2120px] flex-col border-2 border-[#d3d3d3] bg-white shadow-[0_0_50px_10px_#363636] font-['Noto_Sans','Noto_Sans_CJK_TC',sans-serif]">
      <div className="flex h-[176px] shrink-0 bg-[linear-gradient(100deg,#85c26c_30%,#a8c257_85%)]">
        <div className="ml-[54px] mt-[54px] flex h-[70px] text-white">
          <div className="flex w-10 -skew-x-6 flex-col text-[33px] font-bold leading-[33px]"><span>緯</span><span>育</span></div>
          <div className="-ml-px w-[170px] font-['Lato','Open_Sans',sans-serif] text-[52px] font-extrabold italic leading-[66px] tracking-[-0.2px]">TibaMe</div>
        </div>
        <div className="ml-[589px] mt-[38px] whitespace-nowrap text-[65px] font-medium leading-[80px] tracking-[0.5px] text-[#ebebee]">3-1. MVC架構</div>
      </div>
      <div className="ml-[366px] mt-[26px] h-[84px] whitespace-nowrap text-[62px] leading-[84px] text-black">什麼是<span className="text-[63px] tracking-[0.1px]">Flask</span></div>
      <div className="ml-[311px] mt-[7px] flex gap-px">
        <i className="h-[13px] w-[13px] rounded-full bg-[#f0f0f0]" />
        <i className="h-[13px] w-[13px] rounded-full bg-[#dedede]" />
        <i className="h-[13px] w-[13px] rounded-full bg-[#cfcfcf]" />
        <i className="h-[13px] w-[13px] rounded-full bg-[#a5a5a5]" />
        <i className="h-[13px] w-[13px] rounded-full bg-[#7d7d7d]" />
      </div>
      <div className="relative ml-[468px] mt-[198px] h-[182px] w-[1180px] border-2 border-[#919191] whitespace-nowrap text-[48px] text-black">
        <div className="mt-[7px] flex h-[86px] items-center">
          <i className="ml-[15px] h-3.5 w-3.5 rounded-full bg-black" />
          <span className="ml-[24px] w-[113px] pt-1.5 text-[49.5px] tracking-[-0.7px]">Flask</span>
          <span className="w-[240px] pt-1.5">是一個使用</span>
          <span className="w-[160px] pt-1.5 text-[49.5px] tracking-[-0.6px]">Python</span>
          <span className="w-[288px] pt-1.5">編寫的輕量級</span>
          <span className="w-[104px] pt-1.5 text-[50px]">Web</span>
          <span className="w-24 pt-1.5">應用</span>
          <span className="flex h-[86px] w-24 items-center bg-[#c5deff] pt-1.5">框架</span>
        </div>
        <div className="flex h-[88px] items-center">
          <i className="ml-[15px] h-3.5 w-3.5 rounded-full bg-black" />
          <span className="ml-[24px] w-[95px] pt-1.5">基於</span>
          <span className="w-[239px] pt-1.5 text-[49px] tracking-[-0.6px]">Werkzeug</span>
          <span className="w-[126px] pt-1.5 text-[50px] tracking-[-0.3px]">WSGI</span>
          <span className="w-[194px] pt-1.5">工具箱和</span>
          <span className="w-[137px] pt-1.5 text-[49px]">Jinja2</span>
          <span className="pt-1.5">模板引擎</span>
        </div>
        <svg className="absolute left-[149px] top-[160px] h-2 w-[236px]" viewBox="0 0 236 8">
          <polyline points={Array.from({ length: 60 }, (_, i) => i * 4 + "," + (i % 2 ? 1.5 : 6)).join(" ")} fill="none" stroke="#f02020" strokeWidth="1.500" />
        </svg>
        <i className="absolute -top-8 left-[587px] h-8 w-0.5 bg-[#919191]" />
        <span className="absolute -top-[54px] left-[576px] flex h-6 w-6 items-center justify-center rounded-full border-2 border-[#777] bg-white">
          <svg className="h-4 w-4" viewBox="0 0 16 16" fill="none" stroke="#555" strokeWidth="2.400"><path d="M12.500 10.500A5.500 5.500 0 1 1 12 4.500M13.500 1v5H8.500" /></svg>
        </span>
        <Handle className="-left-[9px] -top-[9px]" />
        <Handle className="left-[579px] -top-[9px]" />
        <Handle className="left-[1168px] -top-[9px]" />
        <Handle className="-left-[9px] top-[81px]" />
        <Handle className="left-[1168px] top-[81px]" />
        <Handle className="-left-[9px] top-[171px]" />
        <Handle className="left-[579px] top-[171px]" />
        <Handle className="left-[1168px] top-[171px]" />
      </div>
      <div className="mt-auto pr-[40px] text-right text-[27px] leading-8 text-[#a0a0a0]">23</div>
      <div className="mb-[4px] mt-[8px] flex h-[62px] items-center justify-between whitespace-nowrap pl-[14px] pr-[14px] text-[36px] text-[#828282]">
        <span>Python Flask網頁伺服器建置</span>
        <span lang="zh-TW">施丞優編著【版權所有，不得任意拷貝或引用】</span>
      </div>
    </div>
  );
}

/* ---------- status bar ---------- */
function StatusBar() {
  return (
    <div className="flex h-[46px] shrink-0 items-center whitespace-nowrap border-t-2 border-black bg-linear-to-b from-[#4b4b4b] to-[#3d3d3d] text-[24px] text-[#ececec]">
      <span className="ml-[48px] w-[199px]">投影片 <span className="text-[23.500px] tracking-[0.2px]">23/122</span></span>
      <span>中文 (台灣)</span>
      <div className="ml-auto flex items-center">
        <svg className="h-6 w-[26px]" viewBox="0 0 26 24" fill="#fff"><path d="M13 0l6 6H7zM0 10h26v2.200H0zM0 16h26v2.200H0zM0 21.800h15V24H0z" /></svg>
        <span className="ml-[9px] w-[72px]">備忘稿</span>
        <svg className="ml-[41px] h-6 w-[26px]" viewBox="0 0 26 24" fill="#fff"><path d="M2 0h22q2 0 2 2v15q0 2-2 2H13l-6 5v-5H2q-2 0-2-2V2q0-2 2-2z" /></svg>
        <span className="ml-2 w-12">註解</span>
        <span className="ml-[22px] flex h-11 w-[74px] items-center justify-center bg-[#606060]">
          <svg className="h-[26px] w-7" viewBox="0 0 28 26" fill="none" stroke="#fff" strokeWidth="2.600"><rect x="1.300" y="1.300" width="25.400" height="23.400" rx="2" /><path d="M7 1v24M8 18.500h18M13 7.500h9v4h-9z" /></svg>
        </span>
        <svg className="ml-5 h-6 w-[31px]" viewBox="0 0 31 24" fill="#fff"><rect width="12" height="9" rx="1.500" /><rect x="18" width="12" height="9" rx="1.500" /><rect y="14" width="12" height="9" rx="1.500" /><rect x="18" y="14" width="12" height="9" rx="1.500" /></svg>
        <svg className="ml-[41px] h-6 w-[30px]" viewBox="0 0 30 24" fill="none" stroke="#fff" strokeWidth="2.500"><path d="M0 2h30M3 3v14h24V3M9 9h12M15 17v6M10 23h10" /></svg>
        <i className="ml-9 h-[3px] w-4 bg-white" />
        <span className="ml-[14px] flex h-2 w-[200px] items-center justify-center rounded-full bg-[#7b7b7b]"><i className="h-[22px] w-[22px] rounded-full bg-[#a6a6a6]" /></span>
        <svg className="ml-[13px] h-4 w-[17px]" viewBox="0 0 17 16"><path d="M8.500 0v16M0 8h17" stroke="#fff" strokeWidth="3.200" /></svg>
        <span className="ml-[36px] w-[64px] text-[24px] tracking-[-0.6px]">100%</span>
        <svg className="ml-[40px] mr-[48px] h-[26px] w-[26px]" viewBox="0 0 26 26" fill="none" stroke="#fff" strokeWidth="2"><rect x="1" y="1" width="24" height="24" rx="1" /><path d="M13 4v6M13 16v6M4 13h6M16 13h6M11 6l2-2 2 2M11 20l2 2 2-2M6 11l-2 2 2 2M20 11l2 2-2 2" strokeWidth="1.600" /></svg>
      </div>
    </div>
  );
}

/* ---------- sharing controls ---------- */
function SharePill() {
  return (
    <div className="absolute left-[1113px] top-[47px] flex h-[46px] w-[622px] overflow-hidden rounded-b-[10px] border border-black shadow-lg">
      <div className="flex w-[444px] items-center bg-[#23d959] text-[24px] text-[#24313a]">
        <svg className="ml-[10px] h-6 w-[26px]" viewBox="0 0 26 24"><path d="M24 2Q13 4 12.500 13" fill="none" stroke="#1c5a14" strokeWidth="6" /><path d="M0 12h22L9 24z" fill="#1c5a14" /></svg>
        <span className="ml-[76px] w-[172px] tracking-[0.3px]">您正在分享畫面</span>
        <svg className="ml-[68px] h-[23px] w-[33px]" viewBox="0 0 33 23"><path d="M8 22C3 22 1 19 1 16s2-5 5-6c1-5 4-9 10-9s10 4 11 9c3 1 5 3 5 6s-2 6-7 6z" fill="none" stroke="#1c7a35" strokeWidth="2" /><circle cx="16.500" cy="13" r="5" fill="#f9595c" /></svg>
        <svg className="ml-4 h-[23px] w-[21px]" viewBox="0 0 21 23"><path d="M10.500 0 21 4v7q0 8-10.500 12Q0 19 0 11V4z" fill="#1c4f1c" /><path d="m5 11 4 4 7-8" fill="none" stroke="#23d959" strokeWidth="2.600" /></svg>
      </div>
      <div className="flex flex-1 items-center bg-[#df2828] pb-1 text-[22px] font-medium text-white">
        <i className="ml-[22px] h-4 w-4 rounded-[2px] bg-white" />
        <span className="ml-3">停止分享</span>
      </div>
    </div>
  );
}

const TOOLS = [
  ["滑鼠", <svg key="i" className="ml-1 h-[34px] w-[34px]" viewBox="0 0 34 34"><path d="M4 5 24 13l-5.500 4.500L28 28l-4.500 4L14.500 21 9.500 26z" fill="#fff" /></svg>],
  ["選取", <svg key="i" className="h-8 w-8" viewBox="0 0 32 32" fill="#fff"><path d="M16 0l6 7h-4.500v5h-3V7H10zM16 32l6-7h-4.500v-5h-3v5H10zM0 16l7-6v4.500h5v3H7V22zM32 16l-7-6v4.500h-5v3h5V22zM14.500 14.500h3v3h-3z" /></svg>],
  ["文字", <span key="i" className="font-['Liberation_Serif',serif] text-[42px] font-bold leading-[34px]">T</span>],
  ["畫", <svg key="i" className="h-3.5 w-8" viewBox="0 0 32 14"><path d="M1 9C6 0 11 0 16 7s10 7 15-2" fill="none" stroke="#2b9df4" strokeWidth="2.600" strokeLinecap="round" /></svg>],
  ["圖章", <svg key="i" className="h-[26px] w-8" viewBox="0 0 32 26"><path d="M1 12 5 9l7 8L28 0l4 4-19.500 22z" fill="#fff" /></svg>],
  ["鐳射筆", <svg key="i" className="h-8 w-8" viewBox="0 0 32 32"><path d="m3 29 15-15" stroke="#fff" strokeWidth="7" strokeLinecap="round" /><path d="M20 1v6M27 3l-3 5M31 11h-5M29 19l-5-3M14 4l3 5" stroke="#aaa" strokeWidth="2.600" /></svg>],
  ["擦除", <svg key="i" className="h-8 w-8" viewBox="0 0 32 32"><path d="M20 2 30 12 12 30 2 20z" fill="none" stroke="#fff" strokeWidth="2.200" strokeLinejoin="round" /><path d="M20 2 30 12 20 21 11 11z" fill="#fff" /></svg>],
  ["格式", <i key="i" className="h-8 w-8 rounded-[7px] border-2 border-white bg-[#ff1a1a]" />],
  ["還原", <svg key="i" className="ml-1 h-[34px] w-[34px]" viewBox="0 0 34 34"><path d="M5 12Q10 4 18 4A13 13 0 0 1 31 17 13 13 0 0 1 18 30q-4 0-6-1.500" fill="none" stroke="#fff" strokeWidth="3.600" /><path d="M0 8l13 6L2 21z" fill="#fff" /></svg>],
  ["重做", <svg key="i" className="h-[34px] w-[34px]" viewBox="0 0 34 34"><g transform="matrix(-1 0 0 1 34 0)"><path d="M5 12Q10 4 18 4A13 13 0 0 1 31 17 13 13 0 0 1 18 30q-4 0-6-1.500" fill="none" stroke="#fff" strokeWidth="3.600" /><path d="M0 8l13 6L2 21z" fill="#fff" /></g></svg>],
  ["清除", <svg key="i" className="ml-0.5 h-[30px] w-[26px]" viewBox="0 0 26 30"><path d="M0 4h8V0h10v4h8v4H0zM11 2.500V4h4V2.500zM2 10h22v20H2z" fill="#fff" fillRule="evenodd" /><path d="M8.500 13v14M13 13v14M17.500 13v14" stroke="#0e0e0e" strokeWidth="2" /></svg>],
];

function AnnotationBar() {
  return (
    <div className="absolute left-[743px] top-[237px] flex h-[88px] w-[1362px] items-stretch rounded-xl border-2 border-black bg-linear-to-b from-[#303030] to-black text-[22px] text-[#b9b9b9] shadow-[0_12px_30px_rgba(0,0,0,0.35)]">
      <div className="w-[39px] pl-[9px] pt-[3px]">
        <span className="flex h-7 w-7 items-center justify-center rounded-full bg-[#d22d31]">
          <svg className="h-3.5 w-3.5" viewBox="0 0 14 14"><path d="m2 2 10 10M12 2 2 12" stroke="#fff" strokeWidth="3.600" /></svg>
        </span>
      </div>
      {TOOLS.map(([label, icon]) => (
        <div
          key={label}
          className={
            "flex shrink-0 flex-col items-center " +
            (label === "鐳射筆" ? "w-[143px] " : label === "畫" ? "mx-[3px] w-[98px] rounded-[10px] border border-b-[3px] border-[#262626] border-b-[#aaa] bg-linear-to-b from-[#262626] to-[#141414] " : "w-[104px] ")
          }
        >
          <span className="mt-[9px] flex h-[36px] items-center justify-center text-white">{icon}</span>
          <span className="mt-[3px] leading-[30px]">{label}</span>
        </div>
      ))}
      <div className="ml-[4px] flex w-[118px] flex-col items-center rounded-[10px] border border-b-[3px] border-[#262626] border-b-[#aaa] bg-linear-to-b from-[#262626] to-[#141414]">
        <span className="mt-[9px] flex h-[36px] items-center">
          <svg className="ml-[32px] h-8 w-[35px]" viewBox="0 0 35 32" fill="none" stroke="#2b9df4" strokeWidth="2.200"><path d="M12 7H1.500v23.500h32V7H23M17.500 0v23M7.500 13l10 10 10-10" /></svg>
          <svg className="ml-[14px] mt-2 h-2.5 w-4" viewBox="0 0 16 10"><path d="m1.500 1.500 6.500 6.500 6.500-6.500" fill="none" stroke="#aaa" strokeWidth="2.600" /></svg>
        </span>
        <span className="mt-[3px] font-medium leading-[30px] text-white">儲存</span>
      </div>
    </div>
  );
}

export default function App() {
  return (
    <div className="relative flex h-[1640px] w-[2360px] flex-col overflow-hidden bg-[#0b0712] font-['Inter','Noto_Sans_CJK_TC',sans-serif]">
      <MenuBar />
      <div className="mt-[2px] flex min-h-0 flex-1 flex-col overflow-hidden rounded-[20px] bg-[#2d2d2d] shadow-[inset_0_2px_0_#6b6b6b]">
        <TitleBar />
        <Ribbon />
        <div className="flex min-h-0 flex-1 border-t-2 border-[#565656]">
          <Sidebar />
          <div className="flex min-w-0 flex-1 flex-col border-r-2 border-[#4c4c4c] bg-[#282828]">
            <div className="h-[1359px] shrink-0 overflow-hidden border-b-2 border-black pl-[33px] pt-[82px]">
              <Slide />
            </div>
            <div className="pl-[15px] pt-[12px] text-[26px] leading-[38px] text-[#ededed]">按一下以新增備忘稿</div>
          </div>
        </div>
        <StatusBar />
      </div>
      <Ink />
      <div className="absolute left-[1795px] top-[159px] flex h-[82px] w-[490px] items-center border border-black bg-[#2f3e49] pl-[44px] pt-[8px] text-[24px] font-medium tracking-[0.3px] text-white shadow-xl">發言中: 丞優 施</div>
      <AnnotationBar />
      <SharePill />
      <svg className="absolute left-[2029px] top-[275px] h-[42px] w-[28px]" viewBox="0 0 28 42"><path d="M2 2v30l7-6.500 5 12 5.500-2.500-5-11.500H24z" fill="#000" stroke="#fff" strokeWidth="2.400" strokeLinejoin="round" /></svg>
    </div>
  );
}
